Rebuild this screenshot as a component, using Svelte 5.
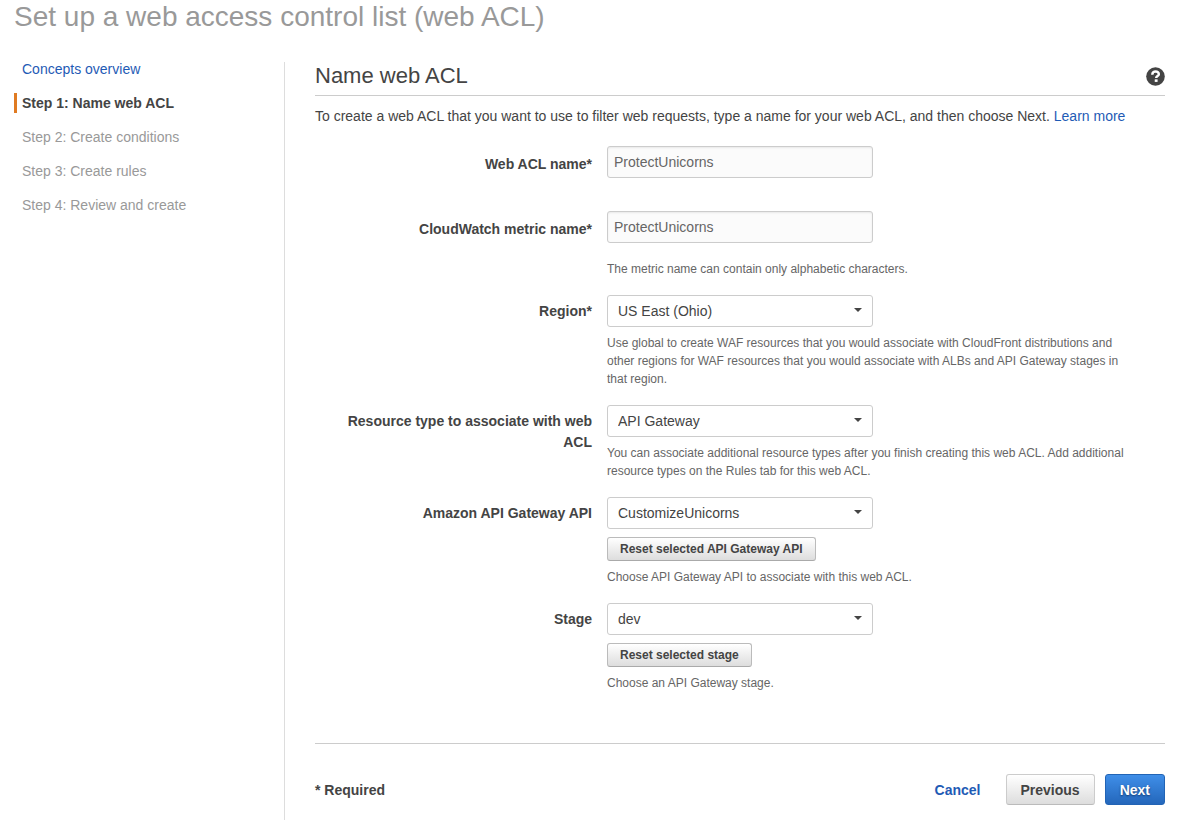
<script>
  const steps = ['Step 2: Create conditions', 'Step 3: Create rules', 'Step 4: Review and create'];
  let aclName = $state('ProtectUnicorns');
  let metricName = $state('ProtectUnicorns');
  let region = $state('US East (Ohio)');
  let resourceType = $state('API Gateway');
  let api = $state('CustomizeUnicorns');
  let stage = $state('dev');
</script>

<div class="page">
  <h1>Set up a web access control list (web ACL)</h1>
  <div class="columns">
    <nav aria-label="Wizard steps">
      <ul>
        <li><a href="#concepts">Concepts overview</a></li>
        <li class="current" aria-current="step">Step 1: Name web ACL</li>
        {#each steps as step}
          <li>{step}</li>
        {/each}
      </ul>
    </nav>

    <main>
      <header>
        <h2>Name web ACL</h2>
        <button class="help" type="button" aria-label="Help">
          <svg viewBox="0 0 20 20" width="19" height="19" aria-hidden="true">
            <circle cx="10" cy="10" r="9.8" fill="#444" />
            <path d="M6.7 8.1V7.5C6.7 5.7 8.1 4.7 10.1 4.7c2 0 3.4 1 3.4 2.8 0 2.1-2.8 2-2.8 4.2" fill="none" stroke="#fff" stroke-width="2.6" />
            <rect x="9.2" y="13" width="3" height="2.7" fill="#fff" />
          </svg>
        </button>
      </header>
      <p class="intro">
        To create a web ACL that you want to use to filter web requests, type a name for your web ACL, and then choose Next.
        <a href="#learn">Learn more</a>
      </p>

      <form onsubmit={(e) => e.preventDefault()}>
        <div class="row spaced">
          <label class="for-input" for="acl-name">Web ACL name*</label>
          <div class="field"><input id="acl-name" type="text" bind:value={aclName} /></div>
        </div>
        <div class="row">
          <label class="for-input" for="metric-name">CloudWatch metric name*</label>
          <div class="field">
            <input id="metric-name" type="text" bind:value={metricName} />
            <p class="far">The metric name can contain only alphabetic characters.</p>
          </div>
        </div>
        <div class="row">
          <label for="region">Region*</label>
          <div class="field">
            <div class="select">
              <select id="region" bind:value={region}><option>US East (Ohio)</option></select>
              <svg viewBox="0 0 8 4" width="8" height="4" aria-hidden="true"><path d="M0 0h8L4 4z" fill="#444" /></svg>
            </div>
            <p>Use global to create WAF resources that you would associate with CloudFront distributions and other regions for WAF resources that you would associate with ALBs and API Gateway stages in that region.</p>
          </div>
        </div>
        <div class="row">
          <label for="resource-type">Resource type to associate with web ACL</label>
          <div class="field">
            <div class="select">
              <select id="resource-type" bind:value={resourceType}><option>API Gateway</option></select>
              <svg viewBox="0 0 8 4" width="8" height="4" aria-hidden="true"><path d="M0 0h8L4 4z" fill="#444" /></svg>
            </div>
            <p>You can associate additional resource types after you finish creating this web ACL. Add additional resource types on the Rules tab for this web ACL.</p>
          </div>
        </div>
        <div class="row">
          <label for="api">Amazon API Gateway API</label>
          <div class="field">
            <div class="select">
              <select id="api" bind:value={api}><option>CustomizeUnicorns</option></select>
              <svg viewBox="0 0 8 4" width="8" height="4" aria-hidden="true"><path d="M0 0h8L4 4z" fill="#444" /></svg>
            </div>
            <button class="small" type="button">Reset selected API Gateway API</button>
            <p>Choose API Gateway API to associate with this web ACL.</p>
          </div>
        </div>
        <div class="row">
          <label for="stage">Stage</label>
          <div class="field">
            <div class="select">
              <select id="stage" bind:value={stage}><option>dev</option></select>
              <svg viewBox="0 0 8 4" width="8" height="4" aria-hidden="true"><path d="M0 0h8L4 4z" fill="#444" /></svg>
            </div>
            <button class="small" type="button">Reset selected stage</button>
            <p>Choose an API Gateway stage.</p>
          </div>
        </div>

        <footer>
          <span class="required">* Required</span>
          <a class="cancel" href="#cancel">Cancel</a>
          <button class="large" type="button">Previous</button>
          <button class="large primary" type="submit">Next</button>
        </footer>
      </form>
    </main>
  </div>
</div>

<style>
  :global(body) {
    margin: 0;
    background: #fff;
  }
  .page {
    display: flex;
    flex-direction: column;
    box-sizing: border-box;
    min-height: 100vh;
    padding: 0 18px 0 14px;
    color: #444;
    font: 14px/20px "Liberation Sans", Arial, sans-serif;
  }
  h1,
  h2,
  p,
  ul {
    margin: 0;
    padding: 0;
    font-weight: normal;
  }
  h1 {
    color: #999;
    font-size: 28px;
    line-height: 34px;
  }
  a {
    color: #1f5bb5;
    text-decoration: none;
  }
  .columns {
    display: flex;
    flex: 1;
    padding-top: 28px;
  }
  nav {
    flex: 0 0 270px;
    margin-top: -3px;
  }
  ul {
    display: flex;
    flex-direction: column;
    gap: 14px;
    list-style: none;
  }
  li {
    padding-left: 5px;
    border-left: 3px solid transparent;
    color: #999;
  }
  .current {
    border-color: #e07b22;
    color: #444;
    font-weight: bold;
  }
  main {
    flex: 1;
    min-width: 0;
    padding-left: 30px;
    border-left: 1px solid #ddd;
  }
  header {
    display: flex;
    align-items: center;
    justify-content: space-between;
    box-sizing: border-box;
    height: 34px;
    padding-bottom: 5px;
    border-bottom: 1px solid #ccc;
  }
  h2 {
    font-size: 22px;
    line-height: 28px;
  }
  button {
    font-family: inherit;
    font-weight: bold;
    color: #444;
    border: 1px solid #bbb;
    border-radius: 3px;
    background: linear-gradient(#fff, #ddd);
    cursor: pointer;
  }
  .help {
    display: flex;
    padding: 0;
    border: 0;
    background: none;
  }
  .intro {
    padding: 10px 0 20px;
  }
  form {
    display: flex;
    flex-direction: column;
    gap: 17px;
  }
  .row {
    display: grid;
    grid-template-columns: 277px minmax(0, 530px);
    column-gap: 15px;
  }
  .spaced {
    padding-bottom: 16px;
  }
  label {
    padding: 6px 0 0 15px;
    font-weight: bold;
    line-height: 21px;
    text-align: right;
  }
  .for-input {
    padding-top: 8px;
  }
  .field {
    display: flex;
    flex-direction: column;
    align-items: flex-start;
    gap: 7px;
  }
  input,
  .select {
    box-sizing: border-box;
    width: 266px;
    max-width: 100%;
    height: 32px;
  }
  input,
  select {
    border: 1px solid #ccc;
    border-radius: 3px;
    font: inherit;
  }
  input {
    padding: 0 6px;
    background: #fbfbfb;
    box-shadow: inset 0 1px 2px #e8e8e8;
    color: #666;
  }
  .select {
    display: grid;
    align-items: center;
  }
  .select > * {
    grid-area: 1 / 1;
  }
  .select svg {
    justify-self: end;
    margin-right: 11px;
    margin-bottom: 2px;
    pointer-events: none;
  }
  select {
    appearance: none;
    width: 100%;
    height: 32px;
    padding: 0 30px 0 10px;
    background: #fff;
    color: #444;
  }
  .field p {
    color: #666;
    font-size: 12px;
    line-height: 18px;
  }
  .field .far {
    padding-top: 10px;
  }
  .small {
    height: 24px;
    margin-top: 1px;
    padding: 0 12px;
    font-size: 12px;
    border-color: #bbb #bbb #aaa;
  }
  footer {
    display: flex;
    align-items: center;
    margin-top: 34px;
    padding: 30px 0 14px;
    border-top: 1px solid #ccc;
    font-weight: bold;
  }
  .required {
    margin-right: auto;
  }
  .cancel {
    margin-right: 25px;
  }
  .large {
    height: 31px;
    padding: 0 14px;
    font-size: 14px;
    border-color: #ccc #ccc #bbb;
  }
  .primary {
    margin-left: 10px;
    color: #fff;
    border-color: #2264b5;
    background: linear-gradient(#3f8ee8, #2467bb);
    text-shadow: 0 1px 2px #123a70;
  }
</style>
